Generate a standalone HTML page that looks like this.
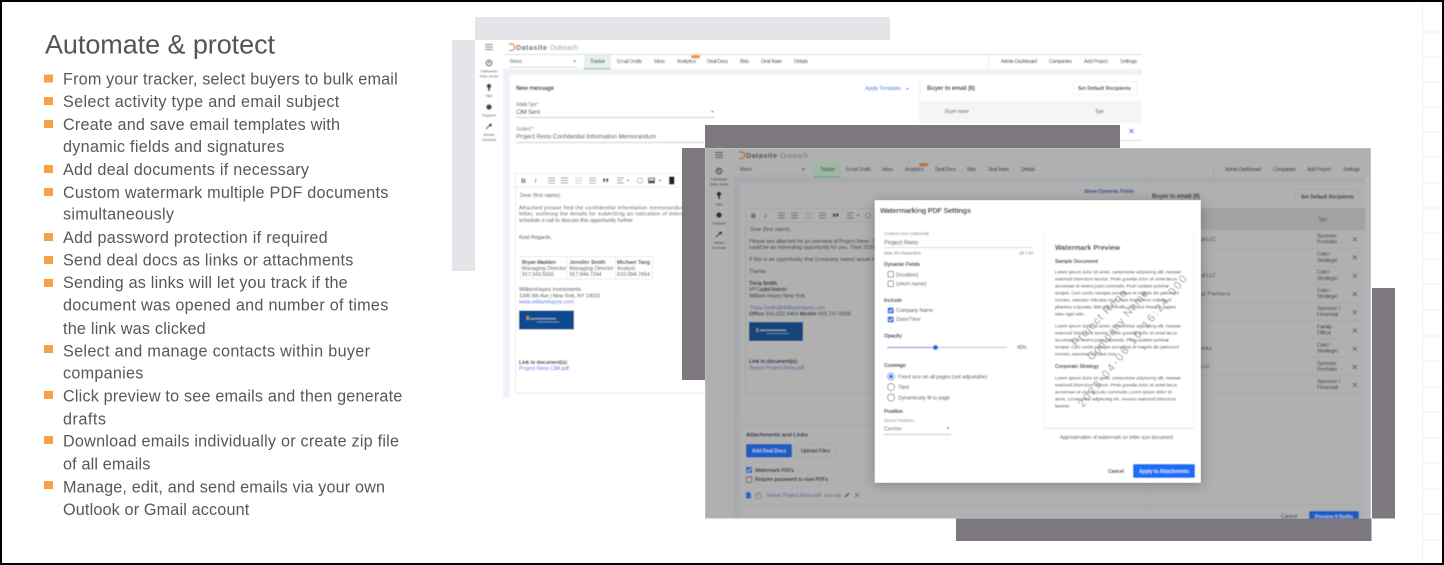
<!DOCTYPE html>
<html><head><meta charset="utf-8"><title>Automate &amp; protect</title>
<style>
html,body{margin:0;padding:0;background:#fff}
svg{display:block;width:1444px;height:565px;font-family:"Liberation Sans",sans-serif}
.l{font-size:16.200px;fill:#58585a}
.s{font-size:5px;fill:#2e2e2e}
.d{fill:#2a2a2a}
.ln{stroke:#ccc;stroke-width:.7;fill:none}
</style></head><body>
<svg xmlns="http://www.w3.org/2000/svg" width="1444" height="565" viewBox="0 0 1444 565">
<defs>
<filter id="f" x="0" y="0" width="100%" height="100%"><feGaussianBlur stdDeviation="0.45"/></filter>
<filter id="t" x="0" y="0" width="100%" height="100%"><feGaussianBlur stdDeviation="0.3"/></filter>
<filter id="sh" x="-10%" y="-10%" width="120%" height="120%"><feGaussianBlur stdDeviation="6"/></filter>
</defs>
<rect width="1444" height="565" fill="#fff"/>

<!-- right grid -->
<g stroke="#f0f0f0" stroke-width="1">
<path d="M1422.500 2V563M1422 32H1442M1422 57H1442M1422 82H1442M1422 107H1442M1422 132H1442M1422 157H1442M1422 183H1442M1422 208H1442M1422 233H1442M1422 259H1442M1422 284H1442M1422 310H1442M1422 336H1442M1422 361H1442M1422 387H1442M1422 412H1442M1422 438H1442M1422 463H1442M1422 489H1442M1422 514H1442M1422 540H1442"/>
</g>

<!-- left text -->
<g filter="url(#t)">
<text x="45" y="53.500" font-size="27" fill="#555557" textLength="230">Automate &amp; protect</text>
<g fill="#f7a14a">
<rect x="44" y="74.500" width="9" height="8"/><rect x="44" y="97" width="9" height="8"/><rect x="44" y="120" width="9" height="8"/><rect x="44" y="165" width="9" height="8"/><rect x="44" y="188" width="9" height="8"/><rect x="44" y="233" width="9" height="8"/><rect x="44" y="256" width="9" height="8"/><rect x="44" y="279" width="9" height="8"/><rect x="44" y="345" width="9" height="8"/><rect x="44" y="391" width="9" height="8"/><rect x="44" y="436" width="9" height="8"/><rect x="44" y="481" width="9" height="8"/>
</g>
<text class="l" x="63" y="84.300" textLength="334.700">From your tracker, select buyers to bulk email</text>
<text class="l" x="63" y="107" textLength="276.300">Select activity type and email subject</text>
<text class="l" x="63" y="130" textLength="277">Create and save email templates with</text>
<text class="l" x="63" y="152" textLength="221.300">dynamic fields and signatures</text>
<text class="l" x="63" y="175" textLength="246">Add deal documents if necessary</text>
<text class="l" x="63" y="198" textLength="325.300">Custom watermark multiple PDF documents</text>
<text class="l" x="63" y="219.500" textLength="111">simultaneously</text>
<text class="l" x="63" y="243" textLength="264.700">Add password protection if required</text>
<text class="l" x="63" y="265.500" textLength="290.300">Send deal docs as links or attachments</text>
<text class="l" x="63" y="288" textLength="284.700">Sending as links will let you track if the</text>
<text class="l" x="63" y="310.700" textLength="325.300">document was opened and number of times</text>
<text class="l" x="63" y="334" textLength="142.700">the link was clicked</text>
<text class="l" x="63" y="356.700" textLength="307">Select and manage contacts within buyer</text>
<text class="l" x="63" y="378.500" textLength="80.300">companies</text>
<text class="l" x="63" y="401.700" textLength="339.300">Click preview to see emails and then generate</text>
<text class="l" x="63" y="424.300" textLength="43">drafts</text>
<text class="l" x="63" y="446.700" textLength="336">Download emails individually or create zip file</text>
<text class="l" x="63" y="469.300" textLength="87.300">of all emails</text>
<text class="l" x="63" y="492.300" textLength="322">Manage, edit, and send emails via your own</text>
<text class="l" x="63" y="515" textLength="186.300">Outlook or Gmail account</text>
</g>

<!-- placeholder blocks behind screen 1 -->
<rect x="475" y="17" width="415" height="23" fill="#e4e4e9"/>
<rect x="452" y="40" width="23" height="231" fill="#e4e4e9"/>

<!-- SCREEN 1 -->
<g filter="url(#f)">
<rect x="475" y="40" width="667" height="358" fill="#fff"/>
<rect x="503" y="69" width="639" height="6" fill="#f0f2f7"/>
<rect x="503" y="69" width="7" height="329" fill="#eef1f8"/>
<rect x="503" y="54" width="639" height=".8" fill="#bfe0c8"/>
<path d="M485 44.500h8M485 47h8M485 49.500h8" stroke="#555" stroke-width=".9"/>
<path d="M509 44h2.500a3.200 3.200 0 0 1 0 6.400H509" fill="none" stroke="#f08a24" stroke-width="1.400"/>
<text x="516" y="50" font-size="7.200" font-weight="bold" fill="#555" textLength="31">Datasite</text>
<text x="550" y="50" font-size="7" fill="#999" textLength="28">Outreach</text>
<text class="s d" x="510" y="63" textLength="12">Reno</text>
<path d="M573 60.500h3l-1.500 2z" fill="#555"/><path d="M510 67h67" class="ln"/>
<rect x="584" y="55" width="27" height="14" fill="#e6f1e9"/><rect x="584" y="68.300" width="27" height=".9" fill="#71b585"/>
<text class="s" x="590" y="63" textLength="15">Tracker</text>
<text class="s" x="617" y="63" textLength="25">Email Drafts</text>
<text class="s" x="654" y="63" textLength="11">Inbox</text>
<text class="s" x="677" y="63" textLength="19">Analytics</text>
<text class="s" x="707" y="63" textLength="21">Deal Docs</text>
<text class="s" x="740" y="63" textLength="9">Bids</text>
<text class="s" x="761" y="63" textLength="21">Deal Team</text>
<text class="s" x="794" y="63" textLength="14">Details</text>
<text class="s" x="1001" y="63" textLength="36">Admin Dashboard</text>
<text class="s" x="1049" y="63" textLength="23">Companies</text>
<text class="s" x="1084" y="63" textLength="24">Add Project</text>
<text class="s" x="1120" y="63" textLength="17">Settings</text>
<rect x="691" y="55" width="9" height="3.500" rx="1.700" fill="#f0964a"/>
<path d="M988.500 55V69" stroke="#e4e4e4" stroke-width=".7"/>
<!-- sidebar -->
<circle cx="489" cy="63" r="2.800" fill="none" stroke="#444" stroke-width="1.100"/><circle cx="489" cy="62.500" r="1" fill="#444"/>
<g font-size="3.900" fill="#444" text-anchor="middle">
<text x="489" y="72.500">Katharine</text><text x="489" y="77.500">Zeta Jones</text>
<text x="489" y="97">Tips</text><text x="489" y="116.500">Support</text>
<text x="489" y="136">Admin</text><text x="489" y="141">Console</text>
</g>
<circle cx="489" cy="86" r="2.300" fill="#444"/><rect x="488" y="88" width="2" height="3" fill="#444"/>
<circle cx="489" cy="107" r="2.800" fill="#444"/>
<path d="M486 129l4-4" stroke="#444" stroke-width="1.200"/><circle cx="490.500" cy="125" r="1.500" fill="#444"/>
<!-- form -->
<text x="516" y="90" font-size="6" font-weight="bold" fill="#2e2e2e" textLength="38">New message</text>
<text x="865" y="90" font-size="5.400" fill="#3a62e0" textLength="36">Apply Template</text>
<path d="M906 88h3l-1.500 1.800z" fill="#3a62e0"/>
<path d="M920 75V125" stroke="#eee" stroke-width=".8"/>
<text x="927" y="90" font-size="6" font-weight="bold" fill="#2e2e2e" textLength="48">Buyer to email (8)</text>
<rect x="1072.500" y="81.500" width="65" height="13" fill="#fff" stroke="#eee" stroke-width=".7"/>
<text x="1078" y="90" font-size="5.100" font-weight="bold" fill="#2e2e2e" textLength="53">Set Default Recipients</text>
<rect x="920" y="101" width="222" height="22" fill="#f5f5f5"/>
<text x="945" y="113" font-size="5" fill="#666" textLength="24">Buyer name</text>
<text x="1095" y="113" font-size="5" fill="#666" textLength="9">Type</text>
<path d="M1129.500 129l4 4M1133.500 129l-4 4" stroke="#3a62e0" stroke-width=".9"/>
<path d="M1120 140.500H1142" class="ln"/>
<text x="516" y="106" font-size="5" fill="#777" textLength="23">Activity Type *</text>
<text x="516" y="114" font-size="6" fill="#2e2e2e" textLength="24">CIM Sent</text>
<path d="M516 117.500H715" stroke="#bbb" stroke-width=".7"/><path d="M711 111h3l-1.500 1.800z" fill="#555"/>
<text x="516" y="130.500" font-size="5" fill="#777" textLength="18">Subject *</text>
<text x="516" y="138.500" font-size="6" fill="#2e2e2e" textLength="140">Project Reno Confidential Information Memorandum</text>
<path d="M516 142.500H705" stroke="#bbb" stroke-width=".7"/>
<!-- editor -->
<rect x="515.500" y="173.500" width="190" height="219.500" fill="#fff" stroke="#e4e4e4" stroke-width=".7"/>
<path d="M515.500 187H705" stroke="#e4e4e4" stroke-width=".7"/>
<text x="521" y="183" font-size="6.800" font-weight="bold" fill="#444">B</text>
<text x="534.500" y="183" font-size="6.800" font-style="italic" fill="#444">I</text>
<g stroke="#777" stroke-width=".8" fill="none"><path d="M548 178h7M548 180.500h7M548 183h7M561 178h7M561 180.500h7M561 183h7M617 178h7M617 180.500h5M617 183h7"/></g>
<g stroke="#bbb" stroke-width=".8" fill="none"><path d="M575 178h7M575 180.500h7M575 183h7"/></g>
<g stroke="#888" stroke-width=".8" fill="none"><path d="M589 178h7M589 180.500h7M589 183h7"/></g>
<path d="M603 178.500h2.200v2.500h-1v1.200h-1.200zM606.300 178.500h2.200v2.500h-1v1.200h-1.200z" fill="#333"/>
<path d="M626.500 179.800h3l-1.500 1.800zM658.500 179.800h3l-1.500 1.800z" fill="#777"/>
<circle cx="640" cy="180.500" r="2.600" fill="none" stroke="#aaa" stroke-width=".8"/>
<rect x="648" y="177.500" width="7" height="6" fill="#555"/><rect x="649" y="178.500" width="5" height="2" fill="#ddd"/>
<rect x="669" y="176.500" width="5.500" height="8" fill="#222"/>
<g font-size="5.300" fill="#333">
<text x="520" y="197" textLength="41">Dear (first name),</text>
<text x="519" y="209.500" textLength="186">Attached please find the confidential information memorandum for Pro</text>
<text x="519" y="215.500" textLength="186">letter, outlining the details for submitting an indication of interest, unde</text>
<text x="519" y="222" textLength="115">schedule a call to discuss this opportunity further.</text>
<text x="519" y="239" textLength="33">Kind Regards,</text>
</g>
<path d="M520.500 256.500H652.500V279H520.500ZM567 256.500V279M615.500 256.500V279" fill="none" stroke="#e4e4e4" stroke-width=".7"/>
<g font-size="5.300" fill="#333">
<text x="522" y="264" font-weight="bold" textLength="34">Bryan Madden</text><text x="522" y="270" textLength="44">Managing Director</text><text x="522" y="276" textLength="32">917.343.5555</text>
<text x="569.500" y="264" font-weight="bold" textLength="36">Jennifer Smith</text><text x="569.500" y="270" textLength="44">Managing Director</text><text x="569.500" y="276" textLength="32">917.944.7244</text>
<text x="617" y="264" font-weight="bold" textLength="33">Michael Tang</text><text x="617" y="270" textLength="18">Analyst</text><text x="617" y="276" textLength="33">610.094.7654</text>
<text x="519" y="291" textLength="62">WilliamHayes Investments</text>
<text x="519" y="297.500" textLength="81">1345 6th Ave | New York, NY 10010</text>
<text x="519" y="303.500" textLength="55" fill="#3a62e0">www.williamhayes.com</text>
<text x="519" y="364" font-weight="bold" textLength="49">Link to document(s):</text>
<text x="519" y="370" textLength="50" fill="#3a62e0">Project Reno CIM.pdf</text>
</g>
<rect x="519" y="310.500" width="55" height="19" fill="#0f4a8e"/>
<rect x="530" y="318" width="26" height="1.600" fill="#7d98b8"/><rect x="537" y="321.500" width="22" height="1" fill="#6d8db0"/><rect x="526.500" y="316" width="2.500" height="4" fill="#a8944e"/>
</g>

<!-- dark overlays -->
<rect x="705" y="125" width="415" height="23" fill="#7d7780"/>
<rect x="682" y="148" width="23" height="232" fill="#7d7780"/>
<rect x="1372" y="288" width="23" height="230.500" fill="#7d7780"/>

<!-- SCREEN 2 -->
<g filter="url(#f)">
<rect x="705" y="148" width="666" height="370.500" fill="#b0b0b1"/>
<rect x="733" y="177" width="7" height="341" fill="#a8aab0"/>
<rect x="733" y="177" width="638" height="6" fill="#a8aab0"/>
<rect x="1365" y="177" width="6" height="341" fill="#b4b4b8"/>
<rect x="733" y="162" width="638" height=".8" fill="#9cb9a8"/>
<path d="M715 152.500h8M715 155h8M715 157.500h8" stroke="#3c3c3c" stroke-width=".9"/>
<path d="M739 152h2.500a3.200 3.200 0 0 1 0 6.400H739" fill="none" stroke="#b86d22" stroke-width="1.400"/>
<text x="746" y="158" font-size="7.200" font-weight="bold" fill="#444" textLength="31">Datasite</text>
<text x="780" y="158" font-size="7" fill="#777" textLength="28">Outreach</text>
<text class="s d" x="740" y="171" textLength="12">Reno</text>
<path d="M802 168.500h3l-1.500 2z" fill="#333"/><path d="M740 175H806" stroke="#999" stroke-width=".6"/>
<rect x="814" y="163" width="26.500" height="14" fill="#9cb8a3"/><rect x="814" y="176.300" width="26.500" height=".9" fill="#5d9a70"/>
<text class="s" x="820" y="171" textLength="15">Tracker</text>
<text class="s" x="846" y="171" textLength="25">Email Drafts</text>
<text class="s" x="882" y="171" textLength="11">Inbox</text>
<text class="s" x="905" y="171" textLength="19">Analytics</text>
<text class="s" x="935" y="171" textLength="21">Deal Docs</text>
<text class="s" x="967" y="171" textLength="9">Bids</text>
<text class="s" x="988" y="171" textLength="21">Deal Team</text>
<text class="s" x="1021" y="171" textLength="14">Details</text>
<text class="s" x="1225" y="171" textLength="36">Admin Dashboard</text>
<text class="s" x="1273" y="171" textLength="23">Companies</text>
<text class="s" x="1307" y="171" textLength="24">Add Project</text>
<text class="s" x="1343" y="171" textLength="17">Settings</text>
<rect x="919" y="163" width="9" height="3.500" rx="1.700" fill="#b5743a"/>
<path d="M1213.500 163V177" stroke="#a0a0a0" stroke-width=".6"/>
<!-- sidebar -->
<circle cx="719" cy="171" r="2.800" fill="none" stroke="#2e2e2e" stroke-width="1.100"/><circle cx="719" cy="170.500" r="1" fill="#2e2e2e"/>
<g font-size="3.900" fill="#333" text-anchor="middle">
<text x="719" y="180.500">Katharine</text><text x="719" y="185.500">Zeta Jones</text>
<text x="719" y="205.500">Tips</text><text x="719" y="224.500">Support</text>
<text x="719" y="244">Admin</text><text x="719" y="249">Console</text>
</g>
<circle cx="719" cy="194" r="2.300" fill="#2e2e2e"/><rect x="718" y="196" width="2" height="3" fill="#2e2e2e"/>
<circle cx="719" cy="215" r="2.800" fill="#2e2e2e"/>
<path d="M716 237l4-4" stroke="#2e2e2e" stroke-width="1.200"/><circle cx="720.500" cy="233" r="1.500" fill="#2e2e2e"/>
<!-- right panel -->
<text x="1084" y="193" font-size="5.400" font-weight="bold" fill="#324c90" textLength="50">Show Dynamic Fields</text>
<path d="M1146.500 183V518" stroke="#a6a6a6" stroke-width=".7"/>
<text x="1152" y="198" font-size="6" font-weight="bold" fill="#2a2a2a" textLength="48">Buyer to email (9)</text>
<rect x="1295.500" y="189.500" width="64" height="14" fill="#b0b0b1" stroke="#a4a4a4" stroke-width=".7"/>
<text x="1301" y="198.500" font-size="5.100" font-weight="bold" fill="#2a2a2a" textLength="53">Set Default Recipients</text>
<rect x="1147" y="208" width="218" height="22" fill="#a2a2a3"/>
<text x="1318" y="221" font-size="5" fill="#5c5c5c" textLength="9">Type</text>
<g stroke="#a0a0a0" stroke-width=".6"><path d="M1147 248.500H1365M1147 266.500H1365M1147 284.500H1365M1147 303H1365M1147 321H1365M1147 339H1365M1147 357.500H1365M1147 375.500H1365M1147 394H1365"/></g>
<g font-size="5.500" fill="#2e2e2e">
<text x="1317" y="237.500" textLength="20">Sponsor</text><text x="1317" y="243.500" textLength="20">Portfolio</text>
<text x="1317" y="255.500" textLength="13">Corp /</text><text x="1317" y="262" textLength="21">Strategic</text>
<text x="1317" y="273.500" textLength="13">Corp /</text><text x="1317" y="280" textLength="21">Strategic</text>
<text x="1317" y="292" textLength="13">Corp /</text><text x="1317" y="298" textLength="21">Strategic</text>
<text x="1317" y="310" textLength="23">Sponsor /</text><text x="1317" y="316" textLength="21">Financial</text>
<text x="1317" y="328.500" textLength="15">Family</text><text x="1317" y="334.500" textLength="14">Office</text>
<text x="1317" y="346.500" textLength="13">Corp /</text><text x="1317" y="352.500" textLength="21">Strategic</text>
<text x="1317" y="365" textLength="20">Sponsor</text><text x="1317" y="371" textLength="20">Portfolio</text>
<text x="1317" y="383" textLength="23">Sponsor /</text><text x="1317" y="389" textLength="21">Financial</text>
<text x="1201" y="241" textLength="15">al LLC</text><text x="1201" y="277" textLength="15">al LLC</text><text x="1201" y="295.500" textLength="29">al Partners</text><text x="1201" y="350" textLength="11">arks</text><text x="1201" y="368" textLength="9">LLC</text>
</g>
<g stroke="#4f5c9a" stroke-width=".9"><path d="M1352.800 237.300l4 4M1356.800 237.300l-4 4M1352.800 255.500l4 4M1356.800 255.500l-4 4M1352.800 273.700l4 4M1356.800 273.700l-4 4M1352.800 292l4 4M1356.800 292l-4 4M1352.800 310.200l4 4M1356.800 310.200l-4 4M1352.800 328.500l4 4M1356.800 328.500l-4 4M1352.800 346.700l4 4M1356.800 346.700l-4 4M1352.800 365l4 4M1356.800 365l-4 4M1352.800 383l4 4M1356.800 383l-4 4"/></g>
<!-- editor -->
<rect x="745.500" y="208.500" width="135" height="184.500" fill="#b0b0b1" stroke="#a0a0a0" stroke-width=".7"/>
<path d="M745.500 222H880" stroke="#a0a0a0" stroke-width=".7"/>
<text x="751" y="218" font-size="6.800" font-weight="bold" fill="#333">B</text>
<text x="764.500" y="218" font-size="6.800" font-style="italic" fill="#333">I</text>
<g stroke="#555" stroke-width=".8" fill="none"><path d="M778 213h7M778 215.500h7M778 218h7M791 213h7M791 215.500h7M791 218h7M819 213h7M819 215.500h7M819 218h7M847 213h7M847 215.500h5M847 218h7"/></g>
<g stroke="#8a8a8a" stroke-width=".8" fill="none"><path d="M805 213h7M805 215.500h7M805 218h7"/></g>
<path d="M833 213.500h2.200v2.500h-1v1.200h-1.200zM836.300 213.500h2.200v2.500h-1v1.200h-1.200z" fill="#222"/>
<path d="M856.500 214.800h3l-1.500 1.800z" fill="#555"/>
<circle cx="868" cy="215.500" r="2.600" fill="none" stroke="#777" stroke-width=".8"/>
<g font-size="5.300" fill="#2a2a2a">
<text x="750" y="231" textLength="41">Dear (first name),</text>
<text x="749" y="243" textLength="126">Please see attached for an overview of Project Reno. T</text>
<text x="749" y="249" textLength="126">could be an interesting opportunity for you. Their 2020</text>
<text x="749" y="261" textLength="126">If this is an opportunity that {company name} would b</text>
<text x="749" y="273" textLength="17">Thanks</text>
<text x="749" y="285" font-weight="bold" textLength="28">Tricia Smith</text>
<text x="749" y="291" textLength="38">VP Capital Markets</text>
<text x="749" y="297.500" textLength="56">William Hayes New York</text>
<text x="750" y="309.500" textLength="75" fill="#3e5ca0">Tricia.Smith@WilliamHayes.com</text>
<text x="749" y="315.500" textLength="102"><tspan font-weight="bold">Office</tspan> 555.632.4464  <tspan font-weight="bold">Mobile</tspan> 555.747.0928</text>
<text x="749" y="363" font-weight="bold" textLength="49">Link to document(s):</text>
<text x="749" y="369.500" textLength="55" fill="#3e5ca0">Teaser Project Reno.pdf</text>
</g>
<rect x="749" y="322" width="54" height="19" fill="#16447e"/>
<rect x="760" y="329.500" width="26" height="1.600" fill="#7e95ad"/><rect x="767" y="333" width="22" height="1" fill="#6480a0"/><rect x="756" y="328" width="2.500" height="4" fill="#8f7d3f"/>
<path d="M740 424.500H875" stroke="#a4a4a4" stroke-width=".7"/>
<!-- attachments -->
<text x="746" y="436.500" font-size="5.900" font-weight="bold" fill="#2a2a2a" textLength="62">Attachments and Links</text>
<rect x="746" y="444" width="46" height="13.500" rx="1.500" fill="#1f5dc2"/>
<text x="752" y="452.600" font-size="5" font-weight="bold" fill="#a9c3ee" textLength="34">Add Deal Docs</text>
<rect x="795.500" y="444" width="40" height="13.500" fill="#b0b0b1" stroke="#a4a4a4" stroke-width=".6"/>
<text x="801" y="452.600" font-size="5" font-weight="bold" fill="#333" textLength="29">Upload Files</text>
<rect x="746" y="467" width="6" height="6" fill="#2a62bf"/><path d="M747 470l1.500 1.500 2.500-3" stroke="#d0d8e8" stroke-width=".7" fill="none"/>
<rect x="746.300" y="476.800" width="5.500" height="5.500" fill="none" stroke="#444" stroke-width=".7"/>
<text x="755" y="471.800" font-size="5" font-weight="bold" fill="#333" textLength="39">Watermark PDFs</text>
<text x="755" y="481" font-size="5" font-weight="bold" fill="#333" textLength="73">Require password to view PDFs</text>
<path d="M746 492h3.500l1.500 1.500V498.500H746z" fill="#2a62bf"/>
<rect x="756" y="494.500" width="5" height="4" fill="none" stroke="#777" stroke-width=".7"/><path d="M757 494.500v-1a1.500 1.500 0 0 1 3 0v1" fill="none" stroke="#777" stroke-width=".6"/>
<text x="766" y="497" font-size="5.200" fill="#3e5ca0" textLength="55">Teaser Project Reno.pdf</text>
<text x="824" y="497" font-size="4.400" fill="#5c5c5c" textLength="17">(493 KB)</text>
<path d="M845 497l4-4" stroke="#444" stroke-width="1.300"/>
<path d="M855 493l4 4M859 493l-4 4" stroke="#3e5ca0" stroke-width=".8"/>
<path d="M740 504.500H1365" stroke="#a2a2a2" stroke-width=".7"/>
<text x="1281" y="518" font-size="5.400" fill="#222" textLength="16">Cancel</text>
<rect x="1309" y="511" width="50" height="12" rx="1.500" fill="#1f5dc2"/>
<text x="1315" y="518.500" font-size="5" font-weight="bold" fill="#a9c3ee" textLength="38">Preview 9 Drafts</text>
</g>

<!-- bottom dark -->
<rect x="956" y="518.500" width="415.500" height="22.500" fill="#7d7780"/>

<!-- MODAL -->
<rect x="874" y="202" width="328" height="283" fill="#444" opacity=".4" filter="url(#sh)"/>
<g filter="url(#f)">
<rect x="874.500" y="200" width="326.500" height="283" fill="#fff"/>
<text x="880" y="213" font-size="7.300" font-weight="bold" fill="#2a2a2a" textLength="91">Watermarking PDF Settings</text>
<text x="884" y="235" font-size="4.800" fill="#888" textLength="45">Custom text (optional)</text>
<text x="884" y="244.300" font-size="6" fill="#3c3c3c" textLength="34">Project Reno</text>
<path d="M884 247.500H1033" stroke="#ccc" stroke-width=".8"/>
<text x="884" y="254.500" font-size="4.800" fill="#777" textLength="37">Max 40 characters</text>
<text x="1019" y="254.500" font-size="4.800" fill="#777" textLength="14">28 / 40</text>
<g font-size="5.200" font-weight="bold" fill="#2e2e2e">
<text x="884" y="266" textLength="36">Dynamic Fields</text>
<text x="884" y="302" textLength="18">Include</text>
<text x="884" y="337.500" textLength="18">Opacity</text>
<text x="884" y="367" textLength="22">Coverage</text>
<text x="884" y="413" textLength="19">Position</text>
</g>
<g font-size="5.300" fill="#3a3a3a">
<text x="896.300" y="276.500" textLength="22">{location}</text>
<text x="896.300" y="285.500" textLength="30">{short name}</text>
<text x="896.300" y="312" textLength="37">Company Name</text>
<text x="896.300" y="321" textLength="24.500">Date/Time</text>
<text x="1017" y="349" textLength="9.500">41%</text>
<text x="898" y="378.500" textLength="89.500">Fixed size on all pages (not adjustable)</text>
<text x="898" y="389" textLength="11">Tiled</text>
<text x="898" y="399.500" textLength="52">Dynamically fit to page</text>
</g>
<rect x="888" y="271.500" width="5.500" height="5.500" rx=".5" fill="none" stroke="#666" stroke-width=".7"/>
<rect x="888" y="281" width="5.500" height="5.500" rx=".5" fill="none" stroke="#666" stroke-width=".7"/>
<rect x="887.700" y="307.500" width="6" height="6" rx=".5" fill="#2f6fde"/><path d="M889 310.500l1.300 1.300 2.200-2.800" stroke="#fff" stroke-width=".7" fill="none"/>
<rect x="887.700" y="316.500" width="6" height="6" rx=".5" fill="#2f6fde"/><path d="M889 319.500l1.300 1.300 2.200-2.800" stroke="#fff" stroke-width=".7" fill="none"/>
<path d="M887 347.500H935" stroke="#2f6fde" stroke-width=".9"/><path d="M935 347.500H1007" stroke="#aaa" stroke-width=".7"/>
<circle cx="935.500" cy="347.500" r="2.500" fill="#2563d8"/>
<circle cx="891" cy="376.500" r="3.500" fill="#fff" stroke="#2f6fde" stroke-width=".7"/><circle cx="891" cy="376.500" r="2" fill="#2f6fde"/>
<circle cx="891" cy="387" r="3.500" fill="#fff" stroke="#666" stroke-width=".7"/>
<circle cx="891" cy="397.500" r="3.500" fill="#fff" stroke="#666" stroke-width=".7"/>
<text x="884" y="422" font-size="4.600" fill="#888" textLength="30">Select Position</text>
<text x="884" y="430.500" font-size="5.800" fill="#3c3c3c" textLength="18">Center</text>
<path d="M946.500 427.500h3l-1.500 1.800z" fill="#444"/>
<path d="M884 434.500H951" stroke="#aaa" stroke-width=".7"/>
<!-- preview -->
<rect x="1043" y="232" width="151" height="196" fill="#fff" stroke="#f2f2f2" stroke-width=".6"/>
<path d="M1043 428.500H1194" stroke="#e8e8e8" stroke-width="1"/>
<text x="1055" y="250" font-size="7.100" font-weight="bold" fill="#2e2e2e" textLength="65">Watermark Preview</text>
<text x="1055" y="263" font-size="5" font-weight="bold" fill="#2e2e2e" textLength="43">Sample Document</text>
<g font-size="4.500" fill="#333">
<text x="1055" y="273.700" textLength="126">Lorem ipsum dolor sit amet, consectetur adipiscing elit. Aenean</text>
<text x="1055" y="280.700" textLength="122">euismod bibendum laoreet. Proin gravida dolor sit amet lacus</text>
<text x="1055" y="287.700" textLength="114">accumsan et viverra justo commodo. Proin sodales pulvinar</text>
<text x="1055" y="294.700" textLength="124">tempor. Cum sociis natoque penatibus et magnis dis parturient</text>
<text x="1055" y="301.700" textLength="116">montes, nascetur ridiculus mus. Nam fermentum nulla quis</text>
<text x="1055" y="308.700" textLength="121">pharetra vulputate, felis tellus mollis orci, sed rhoncus sapien</text>
<text x="1055" y="315.700" textLength="30">nunc eget odio.</text>
<text x="1055" y="327.700" textLength="126">Lorem ipsum dolor sit amet, consectetur adipiscing elit. Aenean</text>
<text x="1055" y="334.700" textLength="122">euismod bibendum laoreet. Proin gravida dolor sit amet lacus</text>
<text x="1055" y="341.700" textLength="114">accumsan et viverra justo commodo. Proin sodales pulvinar</text>
<text x="1055" y="348.700" textLength="124">tempor. Cum sociis natoque penatibus et magnis dis parturient</text>
<text x="1055" y="355.700" textLength="62">montes, nascetur ridiculus mus.</text>
<text x="1055" y="379.700" textLength="126">Lorem ipsum dolor sit amet, consectetur adipiscing elit. Aenean</text>
<text x="1055" y="386.700" textLength="122">euismod bibendum laoreet. Proin gravida dolor sit amet lacus</text>
<text x="1055" y="393.700" textLength="117">accumsan et viverra justo commodo.Lorem ipsum dolor sit</text>
<text x="1055" y="400.700" textLength="121">amet, consectetur adipiscing elit. Aenean euismod bibendum</text>
<text x="1055" y="407.700" textLength="15">laoreet.</text>
</g>
<text x="1055" y="368" font-size="5" font-weight="bold" fill="#2e2e2e" textLength="44">Corporate Strategy</text>
<g font-size="11" fill="#777" fill-opacity=".75">
<text transform="translate(1076 347) rotate(-46)" textLength="74">Project Reno</text>
<text transform="translate(1092 361) rotate(-50)" textLength="88">Company Name</text>
<text transform="translate(1083 408) rotate(-51)" textLength="166">2023-04-06 10:16:24.000</text>
</g>
<text x="1060" y="439" font-size="5" fill="#3c3c3c" textLength="113">Approximation of watermark on letter size document</text>
<text x="1108" y="473" font-size="5.200" font-weight="bold" fill="#333" textLength="16">Cancel</text>
<rect x="1133" y="464" width="62" height="14" rx="1.500" fill="#1a6ef5"/>
<text x="1139" y="473" font-size="5" font-weight="bold" fill="#cfe0ff" textLength="50">Apply to Attachments</text>
</g>

<!-- frame -->
<rect x="1" y="1" width="1442" height="563" fill="none" stroke="#000" stroke-width="2"/>
</svg>
</body></html>
